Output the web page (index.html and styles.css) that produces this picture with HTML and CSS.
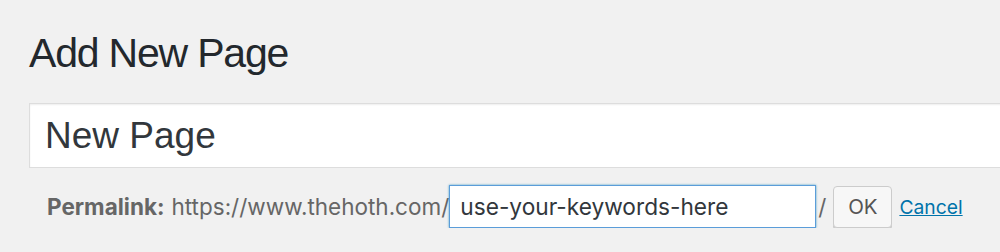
FILE: index.html
```html
<!DOCTYPE html>
<html lang="en">
<head>
    <meta charset="UTF-8">
    <title>Add New Page</title>
    <link rel="stylesheet" href="styles.css">
</head>
<body>

<div id="wrap">
    <h1 class="page-title">Add New Page</h1>

    <div id="titlediv">
        <input type="text" id="title" value="New Page">
    </div>

    <div id="edit-slug-box">
        <strong>Permalink:</strong>
        <span class="sample-permalink">https://www.thehoth.com/</span><input type="text" id="new-post-slug" value="use-your-keywords-here"><span class="slash">/</span>
        <button class="button">OK</button>
        <a href="#" class="cancel">Cancel</a>
    </div>
</div>

</body>
</html>
```

FILE: styles.css
```css
/* Basic page styling */
html, body {
    margin: 0;
    padding: 0;
    background-color: #f1f1f1;
    overflow: hidden;
}

body {
    font-family: Inter, "Noto Sans", sans-serif;
    color: #444;
}

#wrap {
    padding: 25px 0 0 29px;
}

.page-title {
    margin: 0;
    font-family: "Liberation Sans", Arial, sans-serif;
    font-size: 41px;
    font-weight: 400;
    letter-spacing: -1.2px;
    line-height: 56px;
    color: #23282d;
}

/* Title box */
#titlediv {
    margin-top: 22px;
    margin-right: -20px;
}

#title {
    display: block;
    box-sizing: border-box;
    width: 100%;
    height: 65px;
    padding: 0 15px;
    border: 1px solid #ddd;
    background-color: #fff;
    box-shadow: inset 0 1px 2px rgba(0, 0, 0, 0.07);
    font-family: "Liberation Sans", Arial, sans-serif;
    font-size: 37px;
    color: #32373c;
    outline: none;
}

/* Permalink row */
#edit-slug-box {
    display: flex;
    align-items: center;
    margin-top: 17px;
    padding-left: 18px;
    font-size: 22.5px;
    color: #666;
}

#edit-slug-box strong {
    margin-right: 7px;
    font-weight: 700;
}

#new-post-slug {
    box-sizing: border-box;
    width: 367px;
    height: 43px;
    margin: 0;
    padding: 0 10px;
    border: 1px solid #5b9dd9;
    background-color: #fff;
    box-shadow: 0 0 2px rgba(30, 140, 190, 0.8);
    font-family: inherit;
    font-size: 22.7px;
    color: #32373c;
    outline: none;
}

.slash {
    margin: 0 7px 0 2px;
}

.button {
    box-sizing: border-box;
    width: 59px;
    height: 42px;
    margin-right: 7px;
    padding: 0;
    border: 1px solid #ccc;
    border-radius: 4px;
    background-color: #f7f7f7;
    box-shadow: 0 2px 0 #ccc;
    font-family: inherit;
    font-size: 20.5px;
    color: #555;
}

.cancel {
    font-size: 19.3px;
    color: #0073aa;
    text-decoration: underline;
}
```
